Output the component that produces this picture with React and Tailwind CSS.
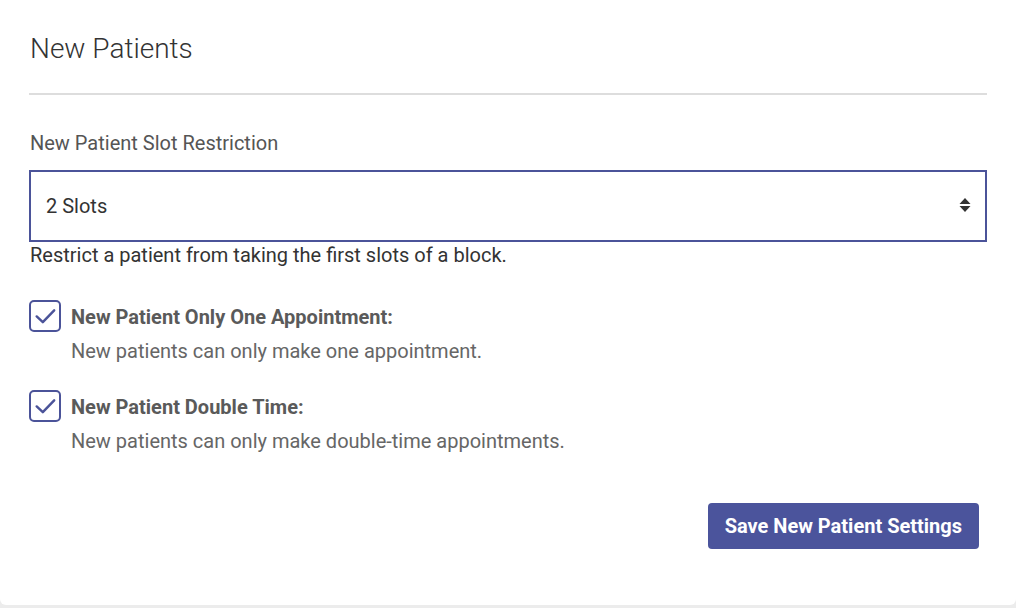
import { useState } from 'react';

const Check = () => (
  <svg width="32" height="32" viewBox="0 0 32 32" fill="none">
    <path d="M6.5 16.5 L13.5 23 L26.5 9.5" stroke="#4b5399" strokeWidth="2.8" strokeLinecap="round" strokeLinejoin="round" />
  </svg>
);

const CheckRow = ({ checked, onToggle, title, desc }) => (
  <div className="flex gap-[10px]">
    <button
      type="button"
      onClick={onToggle}
      className="w-8 h-8 shrink-0 rounded-[5px] border-2 border-[#4b5399] bg-white flex items-center justify-center"
    >
      {checked && <Check />}
    </button>
    <div className="pt-[5px]">
      <div className="text-[20px] leading-6 font-bold text-[#5a5a5a]">{title}</div>
      <div className="mt-[10px] text-[20px] leading-6 text-[#666]">{desc}</div>
    </div>
  </div>
);

const App = () => {
  const [slots, setSlots] = useState('2');
  const [oneAppt, setOneAppt] = useState(true);
  const [doubleTime, setDoubleTime] = useState(true);

  return (
    <div className="w-[1016px] h-[608px] bg-[#ececec] font-['Roboto',sans-serif]">
      <div className="h-[605px] bg-white rounded-b-[6px] pl-[30px] pr-[29px] pt-[32px]">
        <h2 className="text-[28px] leading-[34px] font-light text-[#333]">New Patients</h2>
        <div className="mt-[27px] ml-[-1px] border-b-2 border-[#ddd]"></div>

        <div className="mt-[36px] text-[20px] leading-6 text-[#555]">New Patient Slot Restriction</div>
        <div className="relative mt-[15px] ml-[-1px]">
          <select
            value={slots}
            onChange={(e) => setSlots(e.target.value)}
            className="appearance-none w-full h-[72px] border-2 border-[#4b5399] bg-white pl-[15px] text-[20px] text-[#333] outline-none"
          >
            <option value="0">None</option>
            <option value="1">1 Slot</option>
            <option value="2">2 Slots</option>
            <option value="3">3 Slots</option>
          </select>
          <svg className="absolute right-[16px] top-[27px] pointer-events-none" width="12" height="16" viewBox="0 0 12 16">
            <path d="M6 1 L11.5 7 L0.5 7 Z" fill="#333" />
            <path d="M6 15 L11.5 9 L0.5 9 Z" fill="#333" />
          </svg>
        </div>
        <div className="mt-px text-[20px] leading-6 text-[#333]">Restrict a patient from taking the first slots of a block.</div>

        <div className="mt-[33px] ml-[-1px] flex flex-col gap-[27px]">
          <CheckRow
            checked={oneAppt}
            onToggle={() => setOneAppt(!oneAppt)}
            title="New Patient Only One Appointment:"
            desc="New patients can only make one appointment."
          />
          <CheckRow
            checked={doubleTime}
            onToggle={() => setDoubleTime(!doubleTime)}
            title="New Patient Double Time:"
            desc="New patients can only make double-time appointments."
          />
        </div>

        <div className="mt-[50px] flex justify-end">
          <button
            type="button"
            className="mr-2 h-[46px] px-[17px] rounded-[4px] bg-[#4b549c] text-white text-[20px] font-bold"
          >
            Save New Patient Settings
          </button>
        </div>
      </div>
    </div>
  );
};

export default App;
